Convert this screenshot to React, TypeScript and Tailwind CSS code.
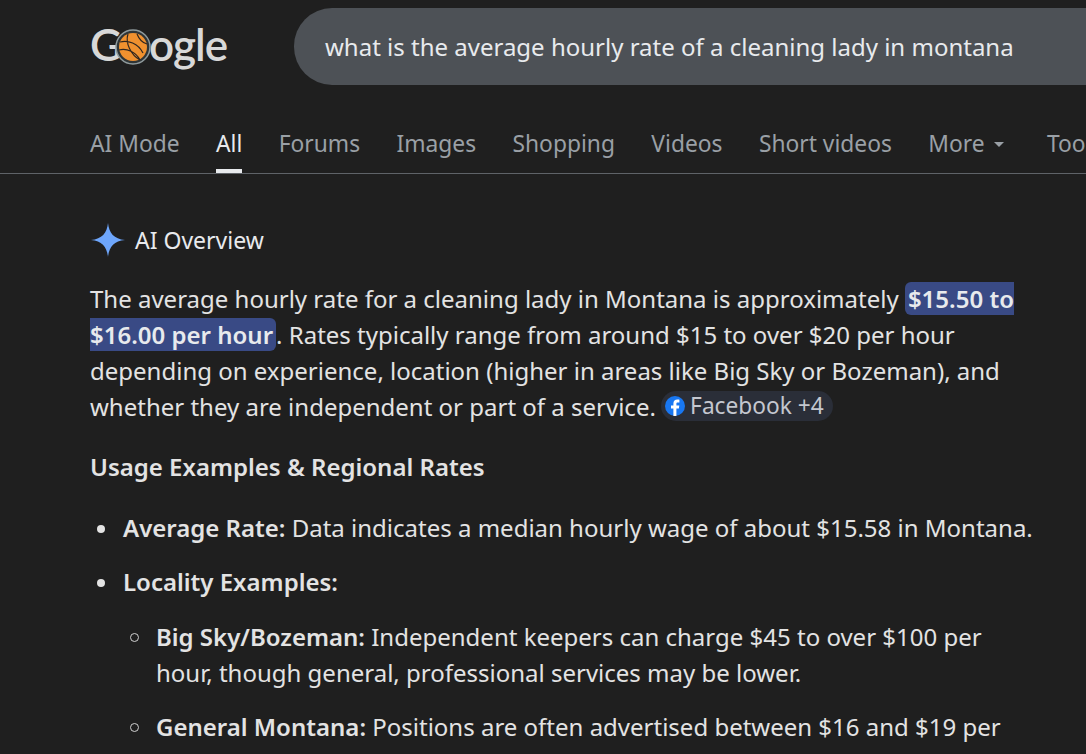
import React from 'react';

const tabs = ['AI Mode', 'All', 'Forums', 'Images', 'Shopping', 'Videos', 'Short videos'];

function Logo() {
  return (
    <div className="flex items-center h-[60px] font-['Lato',sans-serif] text-[44px] leading-none font-semibold text-[#d8d8d8] tracking-[-1px]">
      <span>G</span>
      <svg viewBox="0 0 36 36" className="w-[36px] h-[36px] shrink-0 -ml-[6px] -mr-[2px] relative z-10 mt-[5px]">
        <circle cx="18" cy="18" r="17" fill="#2f3537" stroke="#8f9a9c" strokeWidth="1.5" />
        <circle cx="18" cy="18" r="14" fill="#f0912f" />
        <path d="M5 13c8-2 18 1 23 11M13 5c-3 9 3 21 12 26M4 21c8-2 17 2 21 10M22 5c2 5 6 9 10 10" fill="none" stroke="#2f2620" strokeWidth="1.2" />
      </svg>
      <span>ogle</span>
    </div>
  );
}

function Spark() {
  return (
    <svg viewBox="0 0 36 36" className="w-9 h-9 shrink-0">
      <path d="M18 1C19 11 24 17 35 18 24 19 19 25 18 35 17 25 12 19 1 18 12 17 17 11 18 1Z" fill="#6ea6fb" />
    </svg>
  );
}

export default function App() {
  return (
    <div className="w-[1086px] h-[754px] overflow-hidden bg-[#1f1f1f] text-[#e3e3e3] font-['Noto_Sans',sans-serif]">
      {/* Header */}
      <div className="flex items-start h-[122px] pl-[90px] pt-2">
        <div className="w-[204px] shrink-0 pt-[6px]">
          <Logo />
        </div>
        <div className="w-[900px] shrink-0 h-[77px] rounded-[38px] bg-[#4d5156] flex items-center pl-[31px] text-[24px] text-[#e8eaed] whitespace-nowrap">
          what is the average hourly rate of a cleaning lady in montana
        </div>
      </div>

      {/* Tabs */}
      <div className="flex h-[52px] pl-[90px] gap-[36.4px] border-b border-[#5f6368] text-[22.8px] text-[#9aa0a6] whitespace-nowrap">
        {tabs.map((t) => (
          <div
            key={t}
            className={t === 'All' ? 'h-[51px] pt-[5px] border-b-[4px] border-[#e8eaed] text-[#e8eaed]' : 'h-[51px] pt-[5px]'}
          >
            {t}
          </div>
        ))}
        <div className="flex pt-[5px] gap-[9px]">
          More
          <svg viewBox="0 0 10 5" className="w-[10px] h-[5px] mt-[15px]">
            <path d="M0 0h10L5 5Z" fill="#9aa0a6" />
          </svg>
        </div>
        <div className="pt-[5px] ml-[7px]">Tools</div>
      </div>

      {/* AI Overview */}
      <div className="pl-[90px] w-[1050px]">
        <div className="flex items-center gap-[9px] mt-[48px] text-[23px] text-[#e8eaed]">
          <Spark />
          AI Overview
        </div>

        <p className="mt-[23px] text-[24px] leading-[35.85px]">
          The average hourly rate for a cleaning lady in Montana is approximately{' '}
          <mark className="bg-[#394a85] text-[#e8eaed] font-semibold rounded-l-[6px] pl-[3px]">$15.50 to</mark>{' '}
          <mark className="bg-[#394a85] text-[#e8eaed] font-semibold rounded-r-[6px] pr-[3px]">$16.00 per hour</mark>
          . Rates typically range from around $15 to over $20 per hour depending on experience, location (higher in areas like Big Sky or Bozeman), and whether they are independent or part of a service.{' '}
          <span className="inline-flex items-center h-[30px] rounded-full bg-[#2a2e38] -ml-[1px] pl-[4px] pr-[9px] text-[#c4c7cf] text-[22.7px] align-baseline gap-[5px] leading-[30px]">
            <svg viewBox="0 0 20 20" className="w-[20px] h-[20px]">
              <circle cx="10" cy="10" r="10" fill="#1877f2" />
              <path d="M11.4 20v-7.4h2.5l.4-3h-2.9V7.8c0-.9.3-1.4 1.5-1.4h1.5V3.7c-.3 0-1.2-.1-2.2-.1-2.2 0-3.8 1.3-3.8 3.8v2.2H6v3h2.4V20Z" fill="#fff" />
            </svg>
            Facebook +4
          </span>
        </p>

        <div className="mt-[25px] text-[24px] leading-[36px] font-semibold">Usage Examples &amp; Regional Rates</div>

        <ul className="mt-[25px] text-[24px] leading-[36px]">
          <li className="flex">
            <span className="w-[33px] shrink-0 flex pt-[15px] pl-[7px]">
              <span className="w-[8px] h-[8px] rounded-full bg-[#e3e3e3]" />
            </span>
            <span className="whitespace-nowrap">
              <b className="font-semibold">Average Rate:</b> Data indicates a median hourly wage of about $15.58 in Montana.
            </span>
          </li>
          <li className="flex mt-[18px]">
            <span className="w-[33px] shrink-0 flex pt-[15px] pl-[7px]">
              <span className="w-[8px] h-[8px] rounded-full bg-[#e3e3e3]" />
            </span>
            <b className="font-semibold">Locality Examples:</b>
          </li>
          <li className="flex mt-[19px] pl-[33px] pr-[40px]">
            <span className="w-[33px] shrink-0 flex pt-[14px] pl-[7px]">
              <span className="w-[9px] h-[9px] rounded-full border border-[#d0d0d0]" />
            </span>
            <span>
              <b className="font-semibold">Big Sky/Bozeman:</b> Independent keepers can charge $45 to over $100 per hour, though general, professional services may be lower.
            </span>
          </li>
          <li className="flex mt-[18px] pl-[33px] pr-[40px]">
            <span className="w-[33px] shrink-0 flex pt-[14px] pl-[7px]">
              <span className="w-[9px] h-[9px] rounded-full border border-[#d0d0d0]" />
            </span>
            <span>
              <b className="font-semibold">General Montana:</b> Positions are often advertised between $16 and $19 per hour.
            </span>
          </li>
        </ul>
      </div>
    </div>
  );
}
